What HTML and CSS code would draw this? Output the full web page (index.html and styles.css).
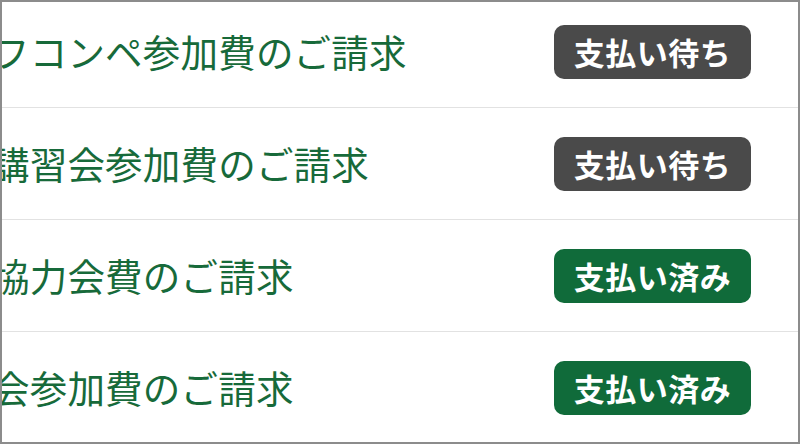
FILE: index.html
```html
<!DOCTYPE html>
<html lang="ja">
<head>
<meta charset="utf-8">
<link rel="stylesheet" href="styles.css">
</head>
<body>
<div class="frame">
  <ul class="list">
    <li class="row">
      <span class="title">フコンペ参加費のご請求</span>
      <span class="badge badge-wait">支払い待ち</span>
    </li>
    <li class="row">
      <span class="title">講習会参加費のご請求</span>
      <span class="badge badge-wait">支払い待ち</span>
    </li>
    <li class="row">
      <span class="title">協力会費のご請求</span>
      <span class="badge badge-done">支払い済み</span>
    </li>
    <li class="row">
      <span class="title">会参加費のご請求</span>
      <span class="badge badge-done">支払い済み</span>
    </li>
  </ul>
</div>
</body>
</html>
```

FILE: styles.css
```css
html, body {
  margin: 0;
  padding: 0;
  background: #ffffff;
}

body {
  font-family: "Noto Sans CJK JP", "Noto Sans", sans-serif;
}

.frame {
  width: 800px;
  height: 444px;
  box-sizing: border-box;
  border: 2px solid #8c8c8c;
  overflow: hidden;
  background: #ffffff;
}

.list {
  list-style: none;
  margin: -6px 0 0 0;
  padding: 0;
}

.row {
  display: flex;
  align-items: center;
  justify-content: space-between;
  height: 111px;
  border-bottom: 1px solid #e2e2e2;
  padding-right: 47px;
}

.title {
  margin-left: -10px;
  margin-top: -2px;
  white-space: nowrap;
  font-size: 37.5px;
  letter-spacing: 0.2px;
  color: #176a3a;
  line-height: 1;
}

.badge {
  display: inline-flex;
  align-items: center;
  justify-content: center;
  width: 197px;
  height: 54px;
  box-sizing: border-box;
  border-radius: 10px;
  color: #ffffff;
  font-weight: 700;
  font-size: 31px;
  letter-spacing: 0.5px;
  line-height: 1;
}

.badge-wait {
  background: #4a4a4a;
}

.badge-done {
  background: #106b3a;
}
```
